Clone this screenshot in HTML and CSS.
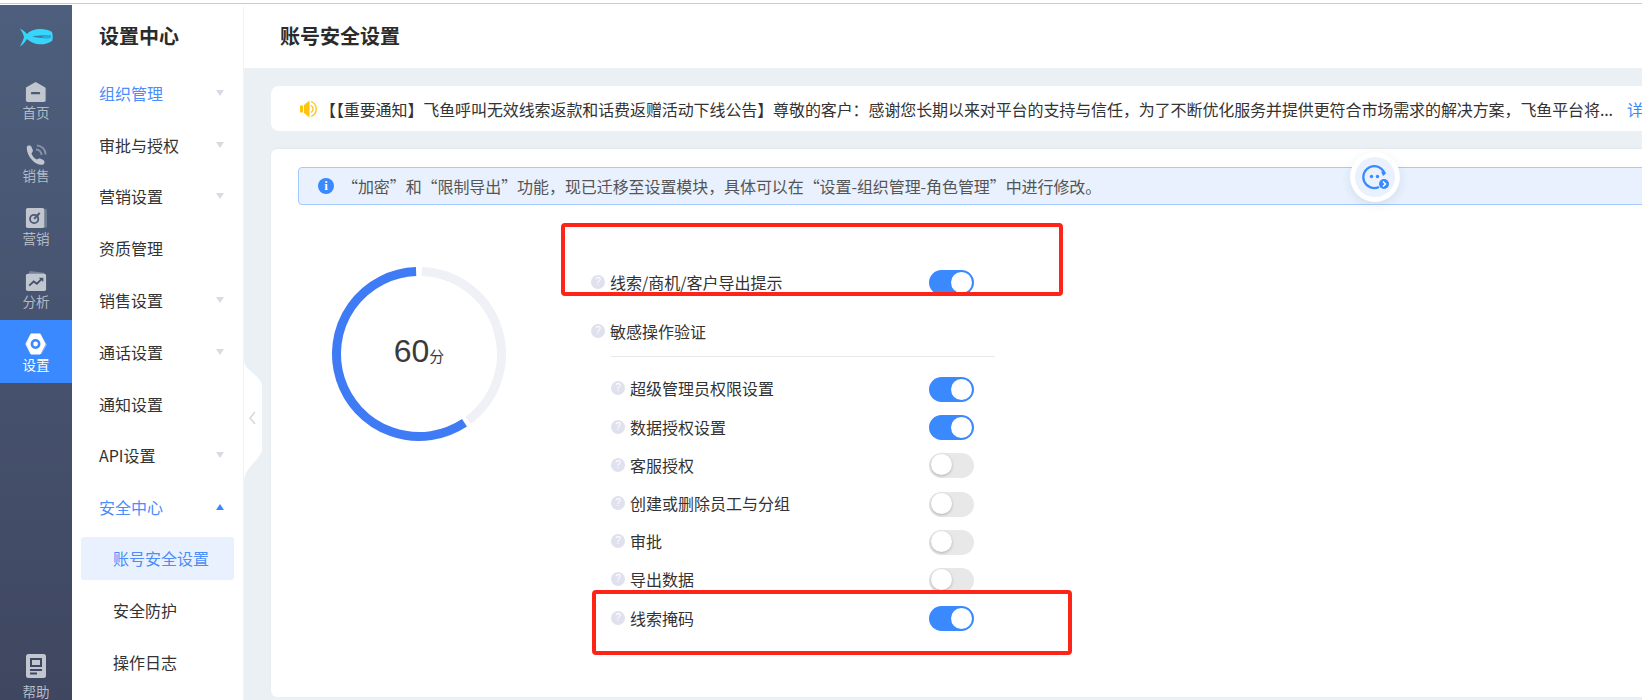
FILE: index.html
```html
<!DOCTYPE html>
<html>
  <head>
    <meta charset="utf-8">
    <title>账号安全设置</title>
    <link rel="stylesheet" href="styles.css">
  </head>
  <body>
    <div class="page">
      <!-- main nav -->
      <div class="nav">
        <div class="nav-logo">
          <svg width="34" height="20" viewBox="0 0 34 20">
            <path d="M1 1.5 C4 3 6 5 8 7 C13 2 24 0 33 5 C34 8 34 12 33 14 C24 20 13 17 8 12 C6 15 4 18 1 19.5 C3 15 4.500 13 5 10 C4.500 7 3 5 1 1.500Z" fill="#36d6fb"/>
            <path d="M13 9.500 C18 8.500 25 8 31 8 C32 9 32 10.500 31 11 C25 11.500 19 11 13 9.500Z" fill="#3f7a9e"/>
            <path d="M23 8.500 C26 8 29 8 31 8 C32 9 32 10.500 31 11 C29 11.300 26 11.400 24 11.200Z" fill="#2fa5dc"/>
          </svg>
        </div>
        <a class="nav-item">
          <svg class="nav-icon" viewBox="0 0 24 24">
            <path d="M13 2 L23 8 V21 a2 2 0 0 1 -2 2 H13Z" fill="#8b95a8"/>
            <path d="M11.500 1 L22 7 V21 a2 2 0 0 1 -2 2 H3 a2 2 0 0 1 -2 -2 V7Z" fill="#c2c6cf"/>
            <rect x="6.500" y="12" width="10" height="2.500" rx="1" fill="#4b5a77"/>
          </svg>
          <span>首页</span>
        </a>
        <a class="nav-item">
          <svg class="nav-icon" viewBox="0 0 24 24">
            <path d="M2 3 C3 1 6 1 7 3 L8.500 6.500 C9 8 8 9 7 10 C8 13 10 15.500 13 17 C14 16 15.500 15.500 17 16 L20 17.500 C22 19 21.500 21.500 19.500 22.500 C13 24.500 1 14 2 3Z" fill="#c2c6cf"/>
            <path d="M12 6 a6 6 0 0 1 6 6 M13 1.500 a10 10 0 0 1 9.500 10" fill="none" stroke="#8b95a8" stroke-width="2"/>
          </svg>
          <span>销售</span>
        </a>
        <a class="nav-item">
          <svg class="nav-icon" viewBox="0 0 24 24">
            <rect x="15" y="2" width="9" height="21" rx="2" fill="#6d7a90"/>
            <rect x="1" y="1" width="20" height="22" rx="2" fill="#c2c6cf"/>
            <circle cx="10" cy="13" r="4.500" fill="none" stroke="#4b5a77" stroke-width="2"/>
            <path d="M10 13 L16 6.500" stroke="#4b5a77" stroke-width="2.200"/>
          </svg>
          <span>营销</span>
        </a>
        <a class="nav-item">
          <svg class="nav-icon" viewBox="0 0 24 24">
            <path d="M4 5 L5 1 L21 3 V8 H4Z" fill="#77839a"/>
            <rect x="1" y="4" width="22" height="19" rx="2" fill="#c2c6cf"/>
            <path d="M4.500 17 L9.500 12.500 L13 15 L18.500 9.500" fill="none" stroke="#47526d" stroke-width="2"/>
            <path d="M15 8.500 H20 V13Z" fill="#47526d"/>
          </svg>
          <span>分析</span>
        </a>
        <a class="nav-item nav-item-on">
          <svg class="nav-icon" viewBox="0 0 24 24">
            <path d="M8 2 H17 L24 13 L18 23 H10Z" fill="#80aef8"/>
            <path d="M6.500 1 H16.500 L22 12 L16.500 23 H6.500 L1 12Z" fill="#fff" stroke="#fff" stroke-width="1" stroke-linejoin="round"/>
            <circle cx="11.500" cy="12" r="4" fill="none" stroke="#3a89fe" stroke-width="2.800"/>
          </svg>
          <span>设置</span>
        </a>
        <a class="nav-item nav-help">
          <svg class="nav-icon" viewBox="0 0 20 24">
            <rect x="0" y="0" width="20" height="24" rx="2.500" fill="#c2c6cf"/>
            <rect x="5" y="5" width="10" height="7" fill="none" stroke="#3f4861" stroke-width="2"/>
            <rect x="4" y="15" width="12" height="2" fill="#3f4861"/>
            <rect x="4" y="18.500" width="7" height="2" fill="#3f4861"/>
          </svg>
          <span>帮助</span>
        </a>
      </div>

      <!-- settings menu -->
      <div class="menu">
        <div class="menu-title">设置中心</div>
        <div class="menu-item is-open">组织管理<i class="caret"></i></div>
        <div class="menu-item">审批与授权<i class="caret"></i></div>
        <div class="menu-item">营销设置<i class="caret"></i></div>
        <div class="menu-item">资质管理</div>
        <div class="menu-item">销售设置<i class="caret"></i></div>
        <div class="menu-item">通话设置<i class="caret"></i></div>
        <div class="menu-item">通知设置</div>
        <div class="menu-item">API设置<i class="caret"></i></div>
        <div class="menu-item is-open">安全中心<i class="caret caret-up"></i></div>
        <div class="menu-sub menu-sub-on">账号安全设置</div>
        <div class="menu-sub">安全防护</div>
        <div class="menu-sub">操作日志</div>
      </div>

      <div class="main">
        <div class="main-head">账号安全设置</div>
        <div class="main-body">
          <div class="notice">
            <svg class="notice-icon" width="20" height="18" viewBox="0 0 20 18">
              <rect x="0" y="5.500" width="3" height="7" fill="#ffc20e"/>
              <path d="M4 5 L9.500 0.500 V17.500 L4 13Z" fill="#ffc20e"/>
              <path d="M11 5.500 a4 4 0 0 1 0 7" fill="none" stroke="#ffc20e" stroke-width="1.300"/>
              <path d="M11 1.500 a8 8 0 0 1 0 15" fill="none" stroke="#ffc20e" stroke-width="1.300"/>
            </svg>
            <span class="notice-text">【【重要通知】飞鱼呼叫无效线索返款和话费返赠活动下线公告】尊敬的客户：感谢您长期以来对平台的支持与信任，为了不断优化服务并提供更符合市场需求的解决方案，飞鱼平台将...</span>
            <a class="notice-more">详情</a>
          </div>

          <div class="card">
            <div class="tip">
              <span class="tip-icon">i</span>
              <span class="tip-text">“加密”和“限制导出”功能，现已迁移至设置模块，具体可以在“设置-组织管理-角色管理”中进行修改。</span>
            </div>

            <div class="card-body">
              <div class="score">
                <svg width="180" height="180" viewBox="0 0 180 180">
                  <path d="M92.900 7.550 A82.500 82.500 0 0 1 139.100 156.300" fill="none" stroke="#f0f1f6" stroke-width="9"/>
                  <path d="M135.500 158.800 A82.500 82.500 0 1 1 87.100 7.550" fill="none" stroke="#3f7bf5" stroke-width="9"/>
                </svg>
                <div class="score-text"><b>60</b><span>分</span></div>
              </div>

              <div class="opts">
                <div class="opt opt-top">
                  <span class="opt-name"><i class="help">?</i>线索/商机/客户导出提示</span>
                  <i class="switch on"></i>
                </div>
                <div class="opt opt-group">
                  <span class="opt-name"><i class="help">?</i>敏感操作验证</span>
                </div>
                <div class="opt-sub">
                  <div class="opt">
                    <span class="opt-name"><i class="help">?</i>超级管理员权限设置</span>
                    <i class="switch on"></i>
                  </div>
                  <div class="opt">
                    <span class="opt-name"><i class="help">?</i>数据授权设置</span>
                    <i class="switch on"></i>
                  </div>
                  <div class="opt">
                    <span class="opt-name"><i class="help">?</i>客服授权</span>
                    <i class="switch"></i>
                  </div>
                  <div class="opt">
                    <span class="opt-name"><i class="help">?</i>创建或删除员工与分组</span>
                    <i class="switch"></i>
                  </div>
                  <div class="opt">
                    <span class="opt-name"><i class="help">?</i>审批</span>
                    <i class="switch"></i>
                  </div>
                  <div class="opt">
                    <span class="opt-name"><i class="help">?</i>导出数据</span>
                    <i class="switch"></i>
                  </div>
                  <div class="opt">
                    <span class="opt-name"><i class="help">?</i>线索掩码</span>
                    <i class="switch on"></i>
                  </div>
                </div>
              </div>
            </div>
          </div>
        </div>

        <!-- collapse tab, sits over the grey gutter -->
        <svg class="collapse" width="20" height="122" viewBox="0 0 20 122">
          <path d="M0 0 C0 12 18 14 18 28 V88 C18 100 0 106 0 122Z" fill="#fff"/>
          <path d="M11 52 L6 58 L11 64" fill="none" stroke="#d5d7db" stroke-width="1.500"/>
        </svg>

        <div class="robot">
          <div class="robot-in">
            <svg width="30" height="30" viewBox="0 0 30 30">
              <path d="M24.500 11 A11 11 0 1 0 19 25" fill="none" stroke="#3a89fe" stroke-width="2.200"/>
              <circle cx="11.500" cy="14.500" r="1.700" fill="#3a89fe"/>
              <circle cx="17.500" cy="14.500" r="1.700" fill="#3a89fe"/>
              <path d="M21 9.500 L26.500 11 L23 14Z" fill="#3a89fe"/>
              <circle cx="24" cy="22" r="5" fill="#3a89fe"/>
              <path d="M23 19.500 L25.500 22 L23 24.500" fill="none" stroke="#fff" stroke-width="1.500"/>
            </svg>
          </div>
        </div>
      </div>

      <!-- red annotations drawn on the screenshot -->
      <div class="mark mark-a"></div>
      <div class="mark mark-b"></div>
    </div>
  </body>
</html>
```

FILE: styles.css
```css
* {
  box-sizing: border-box;
}
html, body {
  margin: 0;
  height: 100%;
  overflow: hidden;
}
body {
  font-family: "Noto Sans CJK SC", "Liberation Sans", sans-serif;
  font-size: 16px;
  color: #333;
  background: #fff;
}
.page {
  position: relative;
  display: flex;
  height: 700px;
  padding-top: 4px;
  border-top: 3px solid #fff;
  overflow: hidden;
}
.page::before {
  content: "";
  position: absolute;
  top: 0;
  left: 0;
  right: 0;
  height: 1px;
  background: #ccc;
}

/* main nav */
.nav {
  display: flex;
  flex-direction: column;
  flex: 0 0 72px;
  margin-top: -2px;
  padding-top: 1px;
  background: linear-gradient(180deg, #4d5f7d 0%, #3f4660 100%);
}
.nav-logo {
  display: flex;
  justify-content: center;
  align-items: center;
  height: 62px;
}
.nav-item {
  display: flex;
  flex-direction: column;
  align-items: center;
  height: 63px;
  padding-top: 13px;
  font-size: 13.500px;
  line-height: 19px;
  color: #b5bac4;
}
.nav-icon {
  display: block;
  width: 22px;
  height: 22px;
}
.nav-item-on {
  color: #fff;
  background: #3a89fe;
}
.nav-help {
  margin-top: auto;
  margin-bottom: -10px;
  height: 56px;
  padding-top: 0;
}
.nav-help .nav-icon {
  width: 20px;
  height: 24px;
  margin-bottom: 4px;
}

/* settings menu */
.menu {
  flex: 0 0 172px;
  padding: 0 9px;
  background: #fff;
  border-right: 1px solid #f0f2f5;
}
.menu-title {
  height: 60px;
  padding-left: 18px;
  font-size: 20px;
  font-weight: 700;
  line-height: 58px;
  color: #2b2b2b;
}
.menu-item {
  display: flex;
  align-items: center;
  justify-content: space-between;
  height: 51.800px;
  padding: 0 10px 0 18px;
  color: #333;
}
.menu-item.is-open {
  color: #4a8dfb;
}
.caret {
  width: 0;
  height: 0;
  border-left: 4px solid transparent;
  border-right: 4px solid transparent;
  border-top: 6px solid #d8dbe3;
}
.caret-up {
  border-top: 0;
  border-bottom: 6px solid #3a89fe;
}
.menu-sub {
  height: 43px;
  margin: 4px 0 9px;
  padding-left: 32px;
  line-height: 42px;
  border-radius: 3px;
}
.menu-sub-on {
  color: #4a8dfb;
  background: #e8f1fd;
}

/* main */
.main {
  position: relative;
  flex: 1;
  min-width: 0;
  display: flex;
  flex-direction: column;
  overflow: hidden;
  background: #ebf0f4;
}
.main-head {
  flex: 0 0 61px;
  padding-left: 36px;
  font-size: 20px;
  font-weight: 700;
  line-height: 57px;
  color: #2b2b2b;
  background: #fff;
}
.main-body {
  width: 1480px;
  padding: 18px 0 0 27px;
}
.notice {
  display: flex;
  align-items: center;
  height: 45px;
  padding-left: 29px;
  white-space: nowrap;
  background: #fff;
  border-radius: 8px 0 0 8px;
}
.notice-icon {
  flex: none;
  margin-right: 0;
}
.notice-text {
  letter-spacing: -0.100px;
}
.notice-more {
  margin-left: 14px;
  color: #3a89fe;
}
.card {
  height: 548px;
  margin-top: 18px;
  padding: 18px 0 0 27px;
  background: #fff;
  border-radius: 6px 0 0 6px;
  box-shadow: 0 -1px 3px rgba(0, 0, 0, 0.04);
}
.tip {
  display: flex;
  align-items: center;
  height: 38px;
  padding-left: 19px;
  color: #555;
  background: #e8f1fd;
  border: 1px solid #a4c9fb;
  border-radius: 4px;
}
.tip-icon {
  flex: none;
  width: 16px;
  height: 16px;
  margin-right: 8px;
  font-family: "Liberation Serif", serif;
  font-size: 13px;
  font-weight: 700;
  line-height: 16px;
  text-align: center;
  color: #fff;
  background: #3a89fe;
  border-radius: 50%;
}
.tip-text {
  letter-spacing: -0.080px;
}
.card-body {
  display: flex;
}
.score {
  position: relative;
  flex: none;
  width: 180px;
  height: 180px;
  margin: 59px 0 0 31px;
}
.score svg {
  display: block;
}
.score-text {
  position: absolute;
  top: 0;
  left: 0;
  right: 0;
  bottom: 0;
  display: flex;
  align-items: baseline;
  justify-content: center;
  padding-top: 67px;
  font-family: "Liberation Sans", "Noto Sans CJK SC", sans-serif;
  color: #3a3a3a;
}
.score-text b {
  font-size: 32px;
  font-weight: 400;
  line-height: 40px;
}
.score-text span {
  font-size: 15px;
}

/* options */
.opts {
  width: 400px;
  margin: 58px 0 0 82px;
}
.opt {
  display: flex;
  align-items: center;
  justify-content: space-between;
  height: 38.200px;
  width: 383px;
}
.opt-name {
  display: flex;
  align-items: center;
}
.help {
  flex: none;
  width: 14px;
  height: 14px;
  margin-right: 5px;
  font-family: "Liberation Sans", sans-serif;
  font-size: 10px;
  font-style: normal;
  line-height: 14px;
  text-align: center;
  color: #fff;
  background: #dfe2ee;
  border-radius: 50%;
}
.opt-group {
  margin-top: 11px;
}
.opt-sub {
  width: 384px;
  margin-left: 20px;
  padding-top: 12px;
  border-top: 1px solid #e8e8e8;
  margin-top: 6px;
}
.opt-sub .opt {
  width: 363px;
}
.opt-sub .switch {
  margin-top: 2px;
}
.switch {
  position: relative;
  flex: none;
  width: 45px;
  height: 25px;
  background: #e8e8e8;
  border-radius: 13px;
}
.switch::after {
  content: "";
  position: absolute;
  top: 1px;
  left: 2px;
  width: 21px;
  height: 21px;
  background: #fff;
  border-radius: 50%;
  box-shadow: 0 1px 3px rgba(0, 0, 0, 0.25);
}
.switch.on {
  background: #3a89fe;
}
.switch.on::after {
  top: 2px;
  left: 22px;
  box-shadow: none;
}

/* over the content */
.collapse {
  position: absolute;
  top: 353px;
  left: 0;
}
.robot {
  position: absolute;
  top: 145px;
  left: 1106px;
  width: 50px;
  height: 50px;
  padding: 5px;
  background: #fff;
  border-radius: 50%;
  box-shadow: 0 3px 10px rgba(60, 90, 150, 0.12);
}
.robot-in {
  display: flex;
  align-items: center;
  justify-content: center;
  width: 40px;
  height: 40px;
  background: #e8f1fd;
  border-radius: 50%;
}
.mark {
  position: absolute;
  border: 4.500px solid #ff2418;
  border-radius: 4px;
}
.mark-a {
  top: 220px;
  left: 561px;
  width: 502px;
  height: 73px;
}
.mark-b {
  top: 587px;
  left: 592px;
  width: 480px;
  height: 65px;
}
```
